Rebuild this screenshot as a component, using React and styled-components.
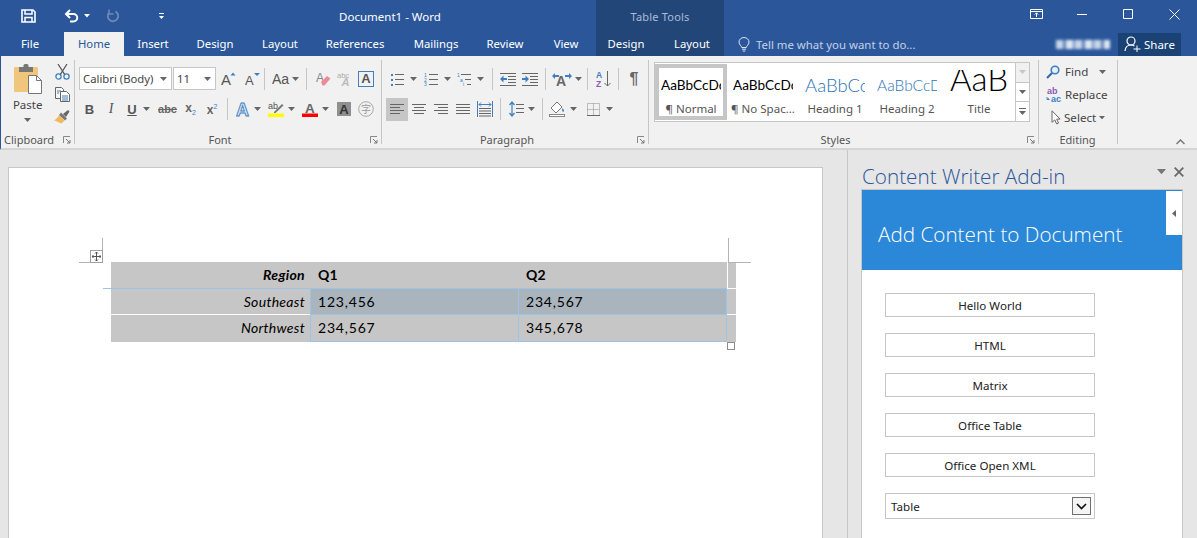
import styled, { createGlobalStyle } from "styled-components";

const UI_FONT = `"Noto Sans", "Open Sans", sans-serif`;
const DOC_FONT = `Lato, "Open Sans", sans-serif`;
const BLUE = "#2b579a";
const DARK = "#234679";
const ICON = "#666";
const ACCENT = "#3f7fbf";

const GlobalStyle = createGlobalStyle`
  html, body { margin: 0; padding: 0; background: #e6e6e6; }
  body { font-family: ${UI_FONT}; font-size: 11.5px; color: #444; }
  * { box-sizing: border-box; }
`;

const Window = styled.div`
  width: 1197px;
  height: 538px;
  overflow: hidden;
  display: flex;
  flex-direction: column;
`;

/* title bar */
const TitleBar = styled.div`
  height: 32px;
  background: ${BLUE};
  display: flex;
  color: #fff;
`;
const Qat = styled.div`
  display: flex;
  align-items: center;
  width: 172px;
  padding-left: 16px;
`;
const QatButton = styled.div`
  width: ${(p) => p.$w}px;
  margin-left: ${(p) => p.$ml || 0}px;
  display: flex;
  align-items: center;
  justify-content: center;
  gap: 5px;
`;
const DocTitle = styled.div`
  width: 424px;
  text-align: center;
  padding-left: 12px;
  line-height: 33px;
  font-size: 11.5px;
  color: #fff;
`;
const ContextTitle = styled.div`
  width: 128px;
  background: ${DARK};
  text-align: center;
  line-height: 34px;
  font-size: 11px;
  letter-spacing: 0.2px;
  color: #a9bcd8;
`;
const WindowButtons = styled.div`
  flex: 1;
  display: flex;
  justify-content: flex-end;
`;
const WindowButton = styled.div`
  width: 46px;
  display: flex;
  align-items: center;
  justify-content: center;
  padding-bottom: 4px;
`;

/* tabs */
const TabRow = styled.div`
  height: 24px;
  background: ${BLUE};
  display: flex;
  align-items: stretch;
`;
const Tab = styled.div`
  width: ${(p) => p.$w}px;
  padding-left: ${(p) => p.$pl || 0}px;
  padding-right: ${(p) => p.$pr || 0}px;
  text-align: center;
  line-height: 24px;
  font-size: 11.3px;
  color: ${(p) => (p.$active ? BLUE : "#fff")};
  background: ${(p) => (p.$active ? "#f1f1f1" : "transparent")};
`;
const ContextTabs = styled.div`
  display: flex;
  width: 128px;
  background: ${DARK};
`;
const TellMe = styled.div`
  display: flex;
  align-items: center;
  gap: 6px;
  margin-left: 14px;
  font-size: 11.4px;
  color: #c3d1e6;
`;
const Account = styled.div`
  margin-left: auto;
  display: flex;
  align-items: center;
  padding-right: 16px;
`;
const Redacted = styled.div`
  width: 54px;
  height: 9px;
  margin-right: 8px;
  filter: blur(1.5px);
  background: repeating-linear-gradient(90deg, #c8d6ea 0 7px, #5f82b5 7px 10px, #dfe7f3 10px 17px, #6f90bf 17px 19px);
`;
const ShareButton = styled.div`
  width: 63px;
  height: 23px;
  background: #1b4274;
  color: #fff;
  display: flex;
  align-items: center;
  gap: 3px;
  padding-left: 6px;
  font-size: 11.5px;
`;

/* ribbon */
const Ribbon = styled.div`
  height: 94px;
  background: #f1f1f1;
  border-left: 1px solid ${BLUE};
  border-bottom: 2px solid #d4d4d4;
  padding-top: 4px;
  display: flex;
  align-items: flex-start;
`;
const Group = styled.div`
  width: ${(p) => p.$w}px;
  height: 84px;
  padding-top: ${(p) => p.$pt ?? 7}px;
  border-right: ${(p) => (p.$last ? "none" : "1px solid #c6c6c6")};
  display: flex;
  flex-direction: column;
  position: relative;
`;
const GroupLabel = styled.div`
  margin-top: auto;
  margin-bottom: -2px;
  height: 12px;
  line-height: 12px;
  font-size: 11px;
  color: #555;
  display: grid;
  grid-template-columns: ${(p) => p.$cols || "1fr auto 1fr"};
  padding-right: ${(p) => p.$pr ?? 16}px;
`;
const LabelText = styled.span`
  grid-column: 2;
`;
const Launcher = styled.svg`
  grid-column: 3;
  justify-self: end;
  align-self: center;
  margin-right: -13px;
`;
const Row = styled.div`
  display: flex;
  align-items: center;
  height: ${(p) => p.$h || 24}px;
  margin-top: ${(p) => p.$mt || 0}px;
  padding-left: ${(p) => p.$pl || 0}px;
`;
const Tool = styled.div`
  width: ${(p) => p.$w}px;
  height: 23px;
  flex: none;
  margin-left: ${(p) => p.$ml || 0}px;
  padding-left: ${(p) => p.$pl || 0}px;
  display: flex;
  align-items: center;
  justify-content: ${(p) => (p.$pl ? "flex-start" : "center")};
  gap: ${(p) => p.$gap ?? 4}px;
  background: ${(p) => (p.$on ? "#c6c6c6" : "transparent")};
`;
const Sep = styled.div`
  width: 1px;
  height: 22px;
  flex: none;
  margin-left: ${(p) => p.$ml || 0}px;
  background: #c6c6c6;
`;
const Glyph = styled.span`
  font-family: ${(p) => p.$font || `"Liberation Sans", sans-serif`};
  font-size: ${(p) => p.$size || 13}px;
  font-weight: ${(p) => (p.$b ? 700 : 400)};
  font-style: ${(p) => (p.$i ? "italic" : "normal")};
  text-decoration: ${(p) => (p.$u ? "underline" : p.$s ? "line-through" : "none")};
  color: ${(p) => p.$c || "#666"};
  line-height: 1;
`;
const Sub = styled.sub`
  font-size: 7px;
  color: ${ACCENT};
  font-weight: 400;
`;
const Sup = styled.sup`
  font-size: 7px;
  color: ${ACCENT};
  font-weight: 400;
`;
const Combo = styled.div`
  width: ${(p) => p.$w}px;
  height: 23px;
  margin-right: ${(p) => p.$mr || 0}px;
  background: #fff;
  border: 1px solid #c6c6c6;
  display: flex;
  align-items: center;
  justify-content: space-between;
  padding: 0 4px 0 3px;
  font-size: 11.3px;
  color: #444;
  white-space: nowrap;
`;
const PasteColumn = styled.div`
  width: 46px;
  display: flex;
  flex-direction: column;
  align-items: center;
`;
const PasteText = styled.div`
  margin-top: 3px;
  font-size: 11.5px;
  line-height: 16px;
  color: #444;
`;
const PasteCaret = styled.div`
  margin-top: 5px;
`;
const ClipColumn = styled.div`
  width: 24px;
  display: flex;
  flex-direction: column;
  align-items: center;
  gap: 7px;
`;
const ClipBody = styled.div`
  display: flex;
  padding-left: 4px;
`;

/* styles gallery */
const Gallery = styled.div`
  margin-left: 5px;
  width: 376px;
  height: 60px;
  background: #fff;
  border: 1px solid #c6c6c6;
  display: flex;
  padding: 1px 0 1px 0;
`;
const StyleItem = styled.div`
  width: 72px;
  height: 56px;
  flex: none;
  border: 4px solid ${(p) => (p.$on ? "#c6c6c6" : "transparent")};
  display: flex;
  flex-direction: column;
  align-items: center;
`;
const StylePreview = styled.div`
  width: 60px;
  height: 34px;
  flex: none;
  overflow: hidden;
  display: flex;
  align-items: center;
  white-space: nowrap;
  font-family: ${DOC_FONT};
  font-size: ${(p) => p.$size || 13.6}px;
  font-weight: ${(p) => p.$weight || 400};
  color: ${(p) => p.$c || "#000"};
`;
const TitlePreview = styled.div`
  width: 60px;
  height: 22px;
  flex: none;
  margin: 2px 0 10px;
  overflow: hidden;
  text-align: center;
  white-space: nowrap;
  font-family: ${DOC_FONT};
  font-size: 33px;
  font-weight: 300;
  color: #000;
`;
const TitleSample = styled.div`
  line-height: 33px;
  margin-top: -8px;
`;
const StyleName = styled.div`
  white-space: nowrap;
  font-size: 11.5px;
  line-height: 16px;
  color: #555;
  margin-top: -1px;
`;
const GalleryScroll = styled.div`
  margin-left: auto;
  width: 14px;
  display: flex;
  flex-direction: column;
  margin-top: -1px;
  margin-bottom: -1px;
  border-left: 1px solid #c6c6c6;
`;
const ScrollButton = styled.div`
  flex: 1;
  background: ${(p) => (p.$off ? "#f0f0f0" : "#fff")};
  border-bottom: ${(p) => (p.$last ? "none" : "1px solid #c6c6c6")};
  display: flex;
  align-items: center;
  justify-content: center;
`;

/* editing */
const EditRow = styled.div`
  height: 23px;
  flex: none;
  padding-left: ${(p) => p.$pl || 7}px;
  display: flex;
  align-items: center;
  gap: ${(p) => p.$gap ?? 3}px;
  font-size: 11.6px;
  color: #444;
`;
const EditCaret = styled.span`
  margin-left: 6px;
`;
const Collapse = styled.div`
  margin-left: 58px;
  margin-top: 79px;
`;

/* document */
const Main = styled.div`
  flex: 1;
  display: flex;
  overflow: hidden;
  background: #e6e6e6;
`;
const DocArea = styled.div`
  width: 847px;
  padding: 17px 0 0 8px;
`;
const Page = styled.div`
  width: 815px;
  height: 400px;
  background: #fff;
  border: 1px solid #c6c6c6;
  padding: 94px 0 0 102px;
  position: relative;
`;
const Crop = styled.div`
  position: absolute;
  left: ${(p) => p.$x}px;
  top: ${(p) => p.$y}px;
  width: ${(p) => p.$w}px;
  height: ${(p) => p.$h}px;
  background: ${(p) => p.$c || "#b4b4b4"};
`;
const MoveHandle = styled.div`
  position: absolute;
  left: 81px;
  top: 82px;
  width: 13px;
  height: 13px;
  background: #fff;
  border: 1px solid #a0a0a0;
  display: flex;
  align-items: center;
  justify-content: center;
`;
const SizeHandle = styled.div`
  position: absolute;
  left: 718px;
  top: 174px;
  width: 8px;
  height: 8px;
  background: #fff;
  border: 1px solid #8c8c8c;
`;
const Table = styled.table`
  border-collapse: separate;
  border-spacing: 0;
  table-layout: fixed;
  width: 625px;
  font-family: ${DOC_FONT};
  font-size: 14px;
  letter-spacing: 0.3px;
  color: #000;
`;
const Cell = styled.td`
  height: ${(p) => p.$h || 26}px;
  padding: 0 5px ${(p) => (p.$h ? 1 : 0)}px ${(p) => (p.$head && !p.$right ? 8 : 7)}px;
  background: ${(p) => (p.$sel ? "#a9b4bd" : "#c6c6c6")};
  text-align: ${(p) => (p.$right ? "right" : "left")};
  font-style: ${(p) => (p.$right ? "italic" : "normal")};
  font-weight: ${(p) => (p.$head ? 700 : 400)};
  letter-spacing: ${(p) => (p.$num ? 0.8 : 0.3)}px;
  border-left: ${(p) => (p.$lead ? "1px solid #9dc3e6" : "none")};
  border-right: ${(p) => (p.$tail ? "1px solid #9dc3e6" : "none")};
  border-bottom: 1px solid ${(p) => (p.$under ? "#9dc3e6" : p.$end ? "#c6c6c6" : "#fff")};
`;
const RowEnd = styled.td`
  background: #c6c6c6;
  padding: 0;
  border-left: ${(p) => (p.$edge ? "1px solid #fff" : "none")};
  border-bottom: 1px solid ${(p) => (p.$plain ? "#c6c6c6" : "#fff")};
`;

/* task pane */
const Pane = styled.div`
  flex: 1;
  border-left: 1px solid #c6c6c6;
  padding-left: 13px;
`;
const PaneHeader = styled.div`
  width: 322px;
  height: 39px;
  display: flex;
  align-items: flex-end;
`;
const PaneTitle = styled.div`
  font-family: "Open Sans", sans-serif;
  font-weight: 300;
  font-size: 20.7px;
  line-height: 28px;
  color: ${BLUE};
  padding-left: 1px;
  margin-bottom: -1px;
  white-space: nowrap;
`;
const PaneControls = styled.div`
  margin-left: auto;
  margin-right: -1px;
  padding-bottom: 12px;
  display: flex;
  align-items: center;
  gap: 8px;
`;
const PaneBox = styled.div`
  width: 322px;
  height: 360px;
  background: #fff;
  border: 1px solid #c6c6c6;
  border-bottom: none;
`;
const Banner = styled.div`
  height: 80px;
  background: #2b88d8;
  color: #fff;
  padding: 28px 0 0 16px;
  font-family: "Open Sans", sans-serif;
  font-weight: 300;
  font-size: 20.7px;
  line-height: 32px;
  position: relative;
`;
const BannerTab = styled.div`
  position: absolute;
  right: 0;
  top: 1px;
  width: 16px;
  height: 44px;
  background: #fff;
  display: flex;
  align-items: center;
  justify-content: center;
`;
const ActionList = styled.div`
  padding: 23px;
  display: flex;
  flex-direction: column;
  gap: 16px;
`;
const Action = styled.button`
  width: 210px;
  height: 24px;
  padding: 0;
  background: #fff;
  border: 1px solid #c6c6c6;
  font-family: ${UI_FONT};
  font-size: 11.6px;
  color: #222;
`;
const Picker = styled.div`
  width: 210px;
  height: 26px;
  border: 1px solid #c6c6c6;
  display: flex;
  align-items: center;
  justify-content: space-between;
  padding: 0 3px 0 5px;
  font-size: 11.6px;
  color: #222;
`;
const PickerArrow = styled.div`
  width: 19px;
  height: 18px;
  background: #f4f4f4;
  border: 1px solid #707070;
  display: flex;
  align-items: center;
  justify-content: center;
`;

/* drawings */
const Ico = ({ w = 14, h = 14, children }) => (
  <svg width={w} height={h} viewBox={`0 0 ${w} ${h}`} fill="none" style={{ display: "block", flex: "none" }}>
    {children}
  </svg>
);
const Caret = ({ c = "#777", w = 7 }) => (
  <svg width={w} height={(w * 4) / 7} viewBox="0 0 7 4" style={{ display: "block", flex: "none" }}>
    <path d="M0 0h7L3.5 4z" fill={c} />
  </svg>
);
const Launch = () => (
  <Launcher width="8" height="8" viewBox="0 0 8 8" fill="none">
    <path d="M.5 7V.5H7" stroke="#888" />
    <path d="M3 3l4 4M7 4v3H4" stroke="#777" />
  </Launcher>
);
const Lines = ({ w = 14, ys, x1 = 0, x2 = 14, s = ICON }) => (
  <Ico w={w} h={14}>
    <path d={ys.map((y, i) => {
      const a = Array.isArray(x1) ? x1[i] : x1;
      const b = Array.isArray(x2) ? x2[i] : x2;
      return `M${a} ${y}H${b}`;
    }).join("")} stroke={s} />
  </Ico>
);

const Save = () => (
  <Ico w={15} h={14}>
    <path d="M1 1h11l2 2v10H1z" stroke="#fff" strokeWidth="1.6" />
    <path d="M4 1v4h7V1M4 13V8.5h7V13" stroke="#fff" strokeWidth="1.5" />
  </Ico>
);
const Undo = () => (
  <Ico w={15} h={14}>
    <path d="M2 5h7.5a3.7 3.7 0 0 1 0 7.5H6" stroke="#fff" strokeWidth="2" />
    <path d="M6 1L2 5l4 4" stroke="#fff" strokeWidth="2" />
  </Ico>
);
const Redo = () => (
  <Ico w={14} h={14}>
    <path d="M9.5 2.5a5.2 5.2 0 1 1-6.5 1.2" stroke="#6d8ab5" strokeWidth="1.8" />
    <path d="M3 .5v4.5h4.5" stroke="#6d8ab5" strokeWidth="1.5" />
  </Ico>
);
const QatMore = () => (
  <Ico w={7} h={7}>
    <path d="M1 .5h5" stroke="#fff" />
    <path d="M1 3h5L3.5 6z" fill="#fff" />
  </Ico>
);
const Bulb = () => (
  <Ico w={12} h={15}>
    <path d="M3.7 10.5C3.5 8.7 1 7.8 1 5a5 4.5 0 0 1 10 0c0 2.8-2.5 3.7-2.7 5.5z" stroke="#dde5f1" />
    <path d="M4 12.2h4M4.7 14h2.6" stroke="#dde5f1" />
  </Ico>
);
const Person = () => (
  <Ico w={17} h={16}>
    <circle cx="7" cy="5" r="4" stroke="#fff" strokeWidth="1.2" />
    <path d="M1 15c.3-3.5 2.4-6 6-6 1.4 0 2.5.3 3.4 1" stroke="#fff" strokeWidth="1.2" />
    <path d="M9.5 13h7M13 9.5v7" stroke="#fff" />
  </Ico>
);
const PasteIcon = () => (
  <Ico w={28} h={30}>
    <rect y="3" width="24" height="25" rx="1" fill="#f0c67c" />
    <path d="M5 8V3h4.5V1.5A1.5 1.5 0 0 1 11 0h2a1.5 1.5 0 0 1 1.5 1.5V3H19v5z" fill="#777" />
    <path d="M14.5 11.5h8l5 5v13h-13z" fill="#fff" stroke="#777" />
    <path d="M22.5 11.5v5h5" stroke="#777" />
  </Ico>
);
const Scissors = () => (
  <Ico w={15} h={16}>
    <circle cx="3.5" cy="12.5" r="2.6" stroke={ACCENT} strokeWidth="1.3" />
    <circle cx="11.5" cy="12.5" r="2.6" stroke={ACCENT} strokeWidth="1.3" />
    <path d="M3 0l6.6 10.4M12 0L5.4 10.4" stroke="#555" strokeWidth="1.2" />
  </Ico>
);
const Copy = () => (
  <Ico w={15} h={15}>
    <path d="M.5.5h6l2 2v9h-8z" fill="#f7f7f7" stroke="#666" />
    <path d="M5.5 4.5h6l3 3v7h-9z" fill="#fff" stroke="#666" />
    <path d="M7 9h6M7 11h6M7 13h6M2 4h4M2 6h2" stroke={ACCENT} />
  </Ico>
);
const Brush = () => (
  <Ico w={16} h={15}>
    <path d="M9 5L14 1l1.5 1.5L12 8z" fill="#666" />
    <path d="M7 3.5l6 6-2 2-6-5.5z" fill="#777" />
    <path d="M5 6l5.5 5.5-3 3C5 13.5 2 12 0 11.5c2-1 4-3 5-5.5z" fill="#f0b95a" />
  </Ico>
);
const Dropdown = () => <Caret c="#666" />;
const SvgText = styled.text`
  font-family: ${(p) => p.$font || `"Liberation Sans", sans-serif`};
`;
const GrowFont = ({ down }) => (
  <Ico w={15} h={15}>
    <SvgText x="0" y="14" fontSize={down ? 13 : 15} fill="#555">A</SvgText>
    <path d={down ? "M9 2h6l-3 3z" : "M9.5 4.5h5L12 1.5z"} fill={ACCENT} />
  </Ico>
);
const Eraser = () => (
  <Ico w={15} h={15}>
    <SvgText x="0" y="11" fontSize="12" fill="#888">A</SvgText>
    <path d="M5 11l6-6 3.5 2.5-6 7H6.5z" fill="#ec8b97" />
  </Ico>
);
const ClearFormat = () => (
  <Ico w={15} h={15}>
    <SvgText x="0" y="6.5" fontSize="7.5" fill="#aaa">abc</SvgText>
    <SvgText x="4.5" y="15" fontSize="11" fontStyle="italic" fontWeight="700" fill="#bbb">A</SvgText>
  </Ico>
);
const TextBorder = styled.div`
  width: 16px;
  height: 16px;
  border: 1px solid ${ACCENT};
  display: flex;
  align-items: center;
  justify-content: center;
`;
const TextEffect = () => (
  <Ico w={14} h={16}>
    <SvgText x="0" y="14.5" fontSize="18" fontWeight="700" fill="#d7e6f5" stroke={ACCENT} strokeWidth="0.9">A</SvgText>
  </Ico>
);
const Highlight = () => (
  <Ico w={16} h={16}>
    <SvgText x="0" y="8" fontSize="9" fill="#555">ab</SvgText>
    <path d="M6 11l8-8 1.5 1.5-8 7.5H6z" fill="#777" />
    <rect y="12.5" width="16" height="3.5" fill="#ff0" />
  </Ico>
);
const FontColor = () => (
  <Ico w={16} h={16}>
    <SvgText x="3" y="11.5" fontSize="13.5" fontWeight="700" fill="#666">A</SvgText>
    <rect y="12.5" width="16" height="3.5" fill="#f00" />
  </Ico>
);
const CharShade = styled.div`
  width: 14px;
  height: 14px;
  background: #8f8f8f;
  display: flex;
  align-items: center;
  justify-content: center;
`;
const Enclose = () => (
  <Ico w={16} h={16}>
    <circle cx="8" cy="8" r="7.3" stroke="#aaa" />
    <SvgText x="3" y="12" fontSize="10" fill="#999" $font={`"Noto Sans CJK SC", sans-serif`}>字</SvgText>
  </Ico>
);
const Bullets = () => (
  <Ico>
    <path d="M1 2h2v2H1zM1 7h2v2H1zM1 12h2v2H1z" fill={ACCENT} />
    <path d="M5 2.5h9M5 7.5h9M5 12.5h9" stroke={ICON} />
  </Ico>
);
const Numbers = () => (
  <Ico>
    <SvgText x="0" y="4.5" fontSize="5" fill={ACCENT}>1</SvgText>
    <SvgText x="0" y="9.5" fontSize="5" fill={ACCENT}>2</SvgText>
    <SvgText x="0" y="14" fontSize="5" fill={ACCENT}>3</SvgText>
    <path d="M5 2.5h9M5 7.5h9M5 12.5h9" stroke={ICON} />
  </Ico>
);
const Multi = () => (
  <Ico>
    <SvgText x="0" y="4.5" fontSize="5" fill={ACCENT}>1</SvgText>
    <SvgText x="3" y="9.5" fontSize="5" fill={ACCENT}>a</SvgText>
    <SvgText x="6" y="14" fontSize="5" fill={ACCENT}>i</SvgText>
    <path d="M4 2.5h10M8 7.5h6M10 12.5h4" stroke={ICON} />
  </Ico>
);
const Indent = ({ more }) => (
  <Ico w={16} h={14}>
    <path d="M0 1.5h16M8 4.5h8M8 7.5h8M8 10.5h8M0 13.5h16" stroke={ICON} />
    <path d={more ? "M0 6h3.5V3.5L7 7l-3.5 3.5V8H0z" : "M7 6H3.5V3.5L0 7l3.5 3.5V8H7z"} fill={ACCENT} />
  </Ico>
);
const TextDirection = () => (
  <Ico w={20} h={14}>
    <SvgText x="4" y="14" fontSize="14" fontWeight="700" fill="#666">A</SvgText>
    <path d="M0 4l3-3v2h4v2H3v2zM20 4l-3-3v2h-4v2h4v2z" fill={ACCENT} />
  </Ico>
);
const Sort = () => (
  <Ico w={15} h={17}>
    <SvgText x="0" y="7.5" fontSize="8.5" fontWeight="700" fill={ACCENT}>A</SvgText>
    <SvgText x="0" y="16.5" fontSize="8.5" fontWeight="700" fill="#8a5bb5">Z</SvgText>
    <path d="M11.5 1v15M8.5 13l3 3 3-3" stroke="#666" />
  </Ico>
);
const Distribute = () => (
  <Ico w={16} h={16}>
    <path d="M.5 0v16M15.5 0v16" stroke={ACCENT} />
    <path d="M2 3.5h12M4 1.5L2 3.5l2 2M12 1.5l2 2-2 2" stroke={ACCENT} />
    <path d="M2 7.5h12M2 10h12M2 12.5h12M2 15h12" stroke={ICON} />
  </Ico>
);
const LineSpacing = () => (
  <Ico w={15} h={16}>
    <path d="M3 1v14M.5 4L3 1l2.5 3M.5 12L3 15l2.5-3" stroke={ACCENT} strokeWidth="1.2" />
    <path d="M7 3.5h8M7 7.5h8M7 11.5h8" stroke={ICON} />
  </Ico>
);
const Shading = () => (
  <Ico w={18} h={16}>
    <path d="M8 1L2 7l5 5 6-6z" fill="#fff" stroke="#777" />
    <path d="M13.5 7c1.5 2 2 3 1 3.7-1 .6-2-.7-1-3.7z" fill={ACCENT} />
    <rect x="0.5" y="13.5" width="15" height="2" fill="#fff" stroke="#888" />
  </Ico>
);
const Borders = () => (
  <Ico w={13} h={13}>
    <path d="M.5.5h12v12H.5zM6.5.5v12M.5 6.5h12" stroke="#888" strokeDasharray="1 1" />
    <path d="M0 12.5h13" stroke="#666" />
  </Ico>
);
const Find = () => (
  <Ico w={14} h={14}>
    <circle cx="9" cy="5" r="3.8" stroke={ACCENT} strokeWidth="1.6" fill="#e5eff8" />
    <path d="M6 8L1 13" stroke="#2f6ca8" strokeWidth="2.2" />
  </Ico>
);
const Replace = () => (
  <Ico w={16} h={15}>
    <SvgText x="1" y="7" fontSize="9" fontWeight="700" fill="#8a5bb5">ab</SvgText>
    <SvgText x="5" y="15" fontSize="9" fontWeight="700" fill={ACCENT}>ac</SvgText>
    <path d="M1 10v2.5h2.5M1 12.5l2-1" stroke={ACCENT} />
  </Ico>
);
const Cursor = () => (
  <Ico w={10} h={15}>
    <path d="M1 .8v11.5l2.8-2.4 1.8 4 1.9-.8-1.8-4h3.4z" fill="#fff" stroke="#666" />
  </Ico>
);

const BUTTONS = ["Hello World", "HTML", "Matrix", "Office Table", "Office Open XML"];
const STYLE_ITEMS = [
  { name: "¶ Normal", text: "AaBbCcDc", on: true },
  { name: "¶ No Spac...", text: "AaBbCcDc" },
  { name: "Heading 1", text: "AaBbCc", size: 18.5, c: "#2e74b5", weight: 300 },
  { name: "Heading 2", text: "AaBbCcD", size: 15.5, c: "#2e74b5", weight: 300 },
];

export default function App() {
  return (
    <Window>
      <GlobalStyle />
      <TitleBar>
        <Qat>
          <QatButton $w={24}><Save /></QatButton>
          <QatButton $w={42} $ml={16}><Undo /><Caret c="#fff" w={6} /></QatButton>
          <QatButton $w={20} $ml={5}><Redo /></QatButton>
          <QatButton $w={12} $ml={32}><QatMore /></QatButton>
        </Qat>
        <DocTitle>Document1 - Word</DocTitle>
        <ContextTitle>Table Tools</ContextTitle>
        <WindowButtons>
          <WindowButton>
            <Ico w={13} h={10}>
              <path d="M.5.5h12v9H.5zM.5 2.5h12" stroke="#fff" />
              <path d="M6.5 8V4M4.8 5.5l1.7-1.7 1.7 1.7" stroke="#fff" />
            </Ico>
          </WindowButton>
          <WindowButton><Ico w={11} h={11}><path d="M0 5.5h10" stroke="#fff" /></Ico></WindowButton>
          <WindowButton><Ico w={11} h={11}><path d="M.5.5h9v9h-9z" stroke="#fff" /></Ico></WindowButton>
          <WindowButton><Ico w={11} h={11}><path d="M.5.5l10 10M10.5.5l-10 10" stroke="#fff" /></Ico></WindowButton>
        </WindowButtons>
      </TitleBar>

      <TabRow>
        <Tab $w={64} $pr={4}>File</Tab>
        <Tab $w={60} $active>Home</Tab>
        <Tab $w={58}>Insert</Tab>
        <Tab $w={66}>Design</Tab>
        <Tab $w={64}>Layout</Tab>
        <Tab $w={86}>References</Tab>
        <Tab $w={76}>Mailings</Tab>
        <Tab $w={62}>Review</Tab>
        <Tab $w={60}>View</Tab>
        <ContextTabs>
          <Tab $w={60}>Design</Tab>
          <Tab $w={68} $pl={4}>Layout</Tab>
        </ContextTabs>
        <TellMe><Bulb />Tell me what you want to do...</TellMe>
        <Account>
          <Redacted />
          <ShareButton><Person />Share</ShareButton>
        </Account>
      </TabRow>

      <Ribbon>
        <Group $w={74} $pt={4}>
          <ClipBody>
            <PasteColumn>
              <PasteIcon />
              <PasteText>Paste</PasteText>
              <PasteCaret><Dropdown /></PasteCaret>
            </PasteColumn>
            <ClipColumn>
              <Scissors />
              <Copy />
              <Brush />
            </ClipColumn>
          </ClipBody>
          <GroupLabel $cols="3px auto 1fr"><LabelText>Clipboard</LabelText><Launch /></GroupLabel>
        </Group>

        <Group $w={307}>
          <Row $h={23} $pl={4}>
            <Combo $w={93} $mr={1}>Calibri (Body)<Dropdown /></Combo>
            <Combo $w={43}>11<Dropdown /></Combo>
            <Tool $w={24}><GrowFont /></Tool>
            <Tool $w={24}><GrowFont down /></Tool>
            <Sep />
            <Tool $w={41} $gap={3}><Glyph $size={14} $c="#555">Aa</Glyph><Dropdown /></Tool>
            <Sep />
            <Tool $w={22} $ml={5}><Eraser /></Tool>
            <Tool $w={21}><ClearFormat /></Tool>
            <Tool $w={22}><TextBorder><Glyph $size={13} $b $c="#555">A</Glyph></TextBorder></Tool>
          </Row>
          <Row $mt={7} $pl={4}>
            <Tool $w={21}><Glyph $b $c="#555">B</Glyph></Tool>
            <Tool $w={22}><Glyph $i $c="#555" $font={`"Liberation Serif", serif`} $size={14}>I</Glyph></Tool>
            <Tool $w={33} $gap={6}><Glyph $u $b $c="#555">U</Glyph><Dropdown /></Tool>
            <Tool $w={25}><Glyph $s $size={11} $b $c="#666">abc</Glyph></Tool>
            <Tool $w={21}><Glyph $b $size={12} $c="#666">x<Sub>2</Sub></Glyph></Tool>
            <Tool $w={22}><Glyph $b $size={12} $c="#666">x<Sup>2</Sup></Glyph></Tool>
            <Sep $ml={4} />
            <Tool $w={35} $pl={8}><TextEffect /><Dropdown /></Tool>
            <Tool $w={34} $pl={5}><Highlight /><Dropdown /></Tool>
            <Tool $w={34} $pl={5}><FontColor /><Dropdown /></Tool>
            <Tool $w={22} $ml={2}><CharShade><Glyph $b $size={13} $c="#333">A</Glyph></CharShade></Tool>
            <Tool $w={22}><Enclose /></Tool>
          </Row>
          <GroupLabel><LabelText>Font</LabelText><Launch /></GroupLabel>
        </Group>

        <Group $w={267}>
          <Row $h={23} $pl={4}>
            <Tool $w={34} $gap={6}><Bullets /><Dropdown /></Tool>
            <Tool $w={34} $gap={6}><Numbers /><Dropdown /></Tool>
            <Tool $w={33} $gap={6}><Multi /><Dropdown /></Tool>
            <Sep $ml={5} />
            <Tool $w={22} $ml={4}><Indent /></Tool>
            <Tool $w={22}><Indent more /></Tool>
            <Sep $ml={4} />
            <Tool $w={41} $gap={3}><TextDirection /><Dropdown /></Tool>
            <Sep />
            <Tool $w={30}><Sort /></Tool>
            <Sep />
            <Tool $w={30}><Glyph $size={16} $b $c="#666">¶</Glyph></Tool>
          </Row>
          <Row $mt={7} $pl={4}>
            <Tool $w={22} $on><Lines ys={[2.5, 5.5, 8.5, 11.5]} x2={[14, 10, 14, 10]} /></Tool>
            <Tool $w={22}><Lines ys={[2.5, 5.5, 8.5, 11.5]} x1={[0, 2, 0, 2]} x2={[14, 12, 14, 12]} /></Tool>
            <Tool $w={22}><Lines ys={[2.5, 5.5, 8.5, 11.5]} x1={[0, 4, 0, 4]} /></Tool>
            <Tool $w={22}><Lines ys={[2.5, 5.5, 8.5, 11.5]} /></Tool>
            <Tool $w={22}><Distribute /></Tool>
            <Sep $ml={4} />
            <Tool $w={41}><LineSpacing /><Dropdown /></Tool>
            <Sep />
            <Tool $w={40} $gap={3}><Shading /><Dropdown /></Tool>
            <Tool $w={33} $gap={6}><Borders /><Dropdown /></Tool>
          </Row>
          <GroupLabel><LabelText>Paragraph</LabelText><Launch /></GroupLabel>
        </Group>

        <Group $w={390} $pt={2}>
          <Gallery>
            {STYLE_ITEMS.map((s) => (
              <StyleItem key={s.name} $on={s.on}>
                <StylePreview $size={s.size} $c={s.c} $weight={s.weight}>{s.text}</StylePreview>
                <StyleName>{s.name}</StyleName>
              </StyleItem>
            ))}
            <StyleItem>
              <TitlePreview><TitleSample>AaB</TitleSample></TitlePreview>
              <StyleName>Title</StyleName>
            </StyleItem>
            <GalleryScroll>
              <ScrollButton $off><Caret c="#c6c6c6" /></ScrollButton>
              <ScrollButton><Caret c="#666" /></ScrollButton>
              <ScrollButton $last>
                <Ico w={7} h={7}><path d="M0 .5h7" stroke="#666" /><path d="M0 3h7L3.5 7z" fill="#666" /></Ico>
              </ScrollButton>
            </GalleryScroll>
          </Gallery>
          <GroupLabel><LabelText>Styles</LabelText><Launch /></GroupLabel>
        </Group>

        <Group $w={79} $pt={0}>
          <EditRow $gap={5}><Find />Find<EditCaret><Dropdown /></EditCaret></EditRow>
          <EditRow><Replace />Replace</EditRow>
          <EditRow $pl={12}><Cursor />Select<Caret c="#666" w={6} /></EditRow>
          <GroupLabel $pr={1}><LabelText>Editing</LabelText></GroupLabel>
        </Group>

        <Collapse>
          <Ico w={9} h={6}><path d="M.5 5l4-4 4 4" stroke="#777" strokeWidth="1.5" /></Ico>
        </Collapse>
      </Ribbon>

      <Main>
        <DocArea>
          <Page>
            <Crop $x={93} $y={70} $w={1} $h={24} />
            <Crop $x={70} $y={94} $w={24} $h={1} />
            <Crop $x={719} $y={70} $w={1} $h={24} />
            <Crop $x={719} $y={94} $w={23} $h={1} />
            <Crop $x={94} $y={120} $w={8} $h={1} $c="#9dc3e6" />
            <MoveHandle>
              <Ico w={9} h={9}>
                <path d="M4.5 0v9M0 4.5h9M3 1.5L4.5 0 6 1.5M3 7.5L4.5 9 6 7.5M1.5 3L0 4.5 1.5 6M7.5 3L9 4.5 7.5 6" stroke="#555" />
              </Ico>
            </MoveHandle>
            <SizeHandle />
            <Table>
              <colgroup>
                <col style={{ width: 199 }} />
                <col style={{ width: 208 }} />
                <col style={{ width: 209 }} />
                <col style={{ width: 9 }} />
              </colgroup>
              <tbody>
                <tr>
                  <Cell $right $head $h={27} $under>Region</Cell>
                  <Cell $head $h={27} $under>Q1</Cell>
                  <Cell $head $h={27} $under>Q2</Cell>
                  <RowEnd $edge />
                </tr>
                <tr>
                  <Cell $right>Southeast</Cell>
                  <Cell $sel $lead $under $num>123,456</Cell>
                  <Cell $sel $lead $tail $under $num>234,567</Cell>
                  <RowEnd />
                </tr>
                <tr>
                  <Cell $right $h={27} $end>Northwest</Cell>
                  <Cell $lead $under $h={27} $num>234,567</Cell>
                  <Cell $lead $tail $under $h={27} $num>345,678</Cell>
                  <RowEnd $plain />
                </tr>
              </tbody>
            </Table>
          </Page>
        </DocArea>
        <Pane>
          <PaneHeader>
            <PaneTitle>Content Writer Add-in</PaneTitle>
            <PaneControls>
              <Caret c="#777" w={9} />
              <Ico w={10} h={10}><path d="M.7.7l8.6 8.6M9.3.7L.7 9.3" stroke="#666" strokeWidth="1.7" /></Ico>
            </PaneControls>
          </PaneHeader>
          <PaneBox>
            <Banner>
              Add Content to Document
              <BannerTab>
                <Ico w={4} h={7}><path d="M4 0v7L0 3.5z" fill="#666" /></Ico>
              </BannerTab>
            </Banner>
            <ActionList>
              {BUTTONS.map((b) => <Action key={b}>{b}</Action>)}
              <Picker>
                Table
                <PickerArrow>
                  <Ico w={11} h={7}><path d="M1 1l4.5 4.5L10 1" stroke="#111" strokeWidth="1.7" /></Ico>
                </PickerArrow>
              </Picker>
            </ActionList>
          </PaneBox>
        </Pane>
      </Main>
    </Window>
  );
}
